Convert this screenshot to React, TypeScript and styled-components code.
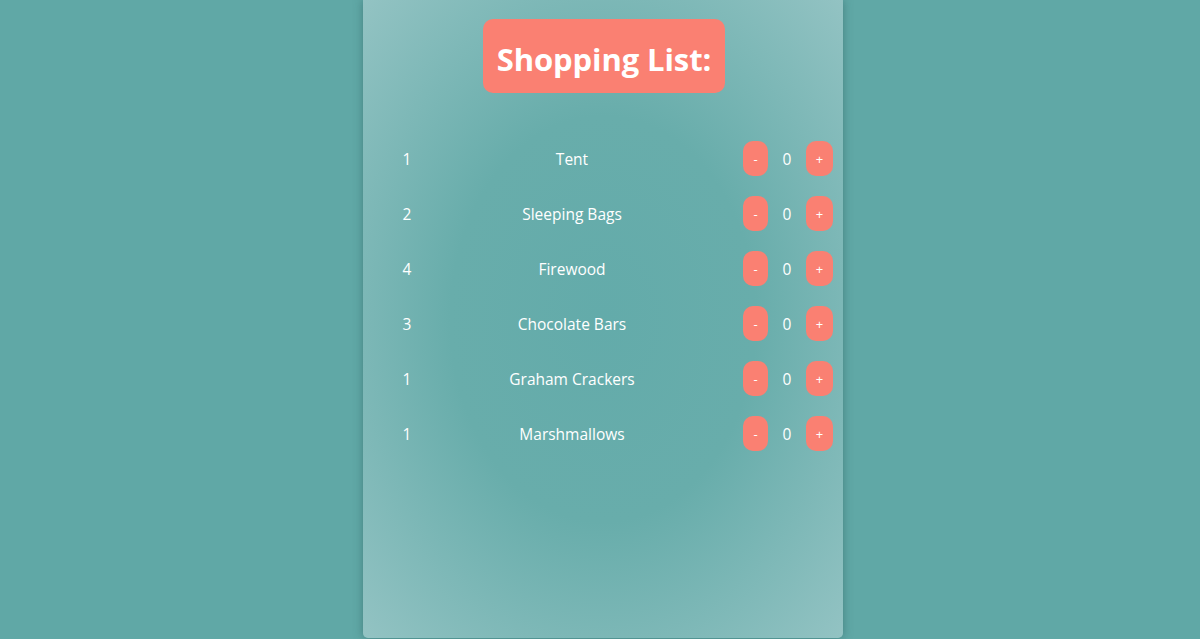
import React from 'react';
import styled, { createGlobalStyle } from 'styled-components';

const items = [
  { id: 1, qty: 1, name: 'Tent' },
  { id: 2, qty: 2, name: 'Sleeping Bags' },
  { id: 3, qty: 4, name: 'Firewood' },
  { id: 4, qty: 3, name: 'Chocolate Bars' },
  { id: 5, qty: 1, name: 'Graham Crackers' },
  { id: 6, qty: 1, name: 'Marshmallows' },
];

const GlobalStyle = createGlobalStyle`
  html, body {
    margin: 0;
    padding: 0;
    background: #60a8a6;
    font-family: "Open Sans", "Noto Sans", sans-serif;
    color: #ffffff;
  }
`;

export default function App() {
  return (
    <>
      <GlobalStyle />
      <Page>
        <Card>
          <Title>Shopping List:</Title>
          <List>
            {items.map((item) => (
              <Row key={item.id}>
                <Qty>{item.qty}</Qty>
                <Name>{item.name}</Name>
                <Controls>
                  <CountButton $wide={false}>-</CountButton>
                  <Count>0</Count>
                  <CountButton $wide>+</CountButton>
                </Controls>
              </Row>
            ))}
          </List>
        </Card>
      </Page>
    </>
  );
}

const Page = styled.div`
  display: flex;
  justify-content: center;
  padding-left: 6px;
  height: 639px;
`;

const Card = styled.div`
  width: 480px;
  height: 638px;
  border-radius: 0 0 5px 5px;
  background: radial-gradient(ellipse at 50% 50%, #63abaa 0%, #68adab 45%, #93c3c3 100%);
  box-shadow: 0 0 10px rgba(40, 90, 90, 0.5);
  display: flex;
  flex-direction: column;
  align-items: center;
`;

const Title = styled.h1`
  margin: 19px 0 0 0;
  padding: 0 14px;
  height: 74px;
  line-height: 80px;
  background: #fa8072;
  border-radius: 10px;
  font-size: 31px;
  font-weight: 700;
  letter-spacing: -0.1px;
  color: #ffffff;
  transform: translateX(1px);
`;

const List = styled.ul`
  list-style: none;
  margin: 38px 0 0 0;
  padding: 0;
  width: 100%;
`;

const Row = styled.li`
  display: grid;
  grid-template-columns: 88px 242px 1fr;
  align-items: center;
  height: 55px;
`;

const Qty = styled.span`
  text-align: center;
  font-size: 15.5px;
`;

const Name = styled.span`
  text-align: center;
  font-size: 15.5px;
`;

const Controls = styled.div`
  display: flex;
  align-items: center;
  padding-left: 50px;
`;

const CountButton = styled.button<{ $wide: boolean }>`
  width: ${(p) => (p.$wide ? '27px' : '25px')};
  height: 35px;
  border: none;
  border-radius: 10px;
  background: #fa8072;
  color: #ffffff;
  font-family: "Open Sans", "Noto Sans", sans-serif;
  font-size: 13px;
  padding: 0;
  cursor: pointer;
`;

const Count = styled.span`
  width: 38px;
  text-align: center;
  font-size: 15.5px;
`;
